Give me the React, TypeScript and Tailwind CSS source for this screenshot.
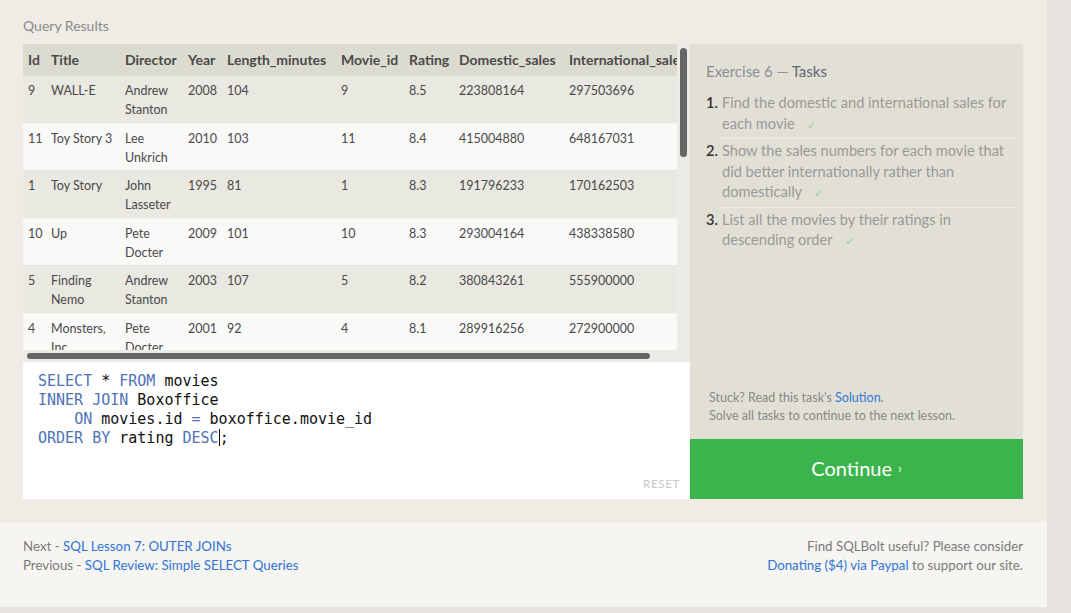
import React from 'react';

const COLS = [
  { key: 'id', label: 'Id', w: 23 },
  { key: 'title', label: 'Title', w: 74 },
  { key: 'director', label: 'Director', w: 63 },
  { key: 'year', label: 'Year', w: 39 },
  { key: 'len', label: 'Length_minutes', w: 114 },
  { key: 'mid', label: 'Movie_id', w: 68 },
  { key: 'rating', label: 'Rating', w: 50 },
  { key: 'dom', label: 'Domestic_sales', w: 110 },
  { key: 'intl', label: 'International_sales', w: 140 },
];

const ROWS = [
  ['9', 'WALL-E', 'Andrew Stanton', '2008', '104', '9', '8.5', '223808164', '297503696'],
  ['11', 'Toy Story 3', 'Lee Unkrich', '2010', '103', '11', '8.4', '415004880', '648167031'],
  ['1', 'Toy Story', 'John Lasseter', '1995', '81', '1', '8.3', '191796233', '170162503'],
  ['10', 'Up', 'Pete Docter', '2009', '101', '10', '8.3', '293004164', '438338580'],
  ['5', 'Finding Nemo', 'Andrew Stanton', '2003', '107', '5', '8.2', '380843261', '555900000'],
  ['4', 'Monsters, Inc.', 'Pete Docter', '2001', '92', '4', '8.1', '289916256', '272900000'],
  ['7', 'Ratatouille', 'Brad Bird', '2007', '115', '7', '8.0', '206445654', '417277164'],
];

const TASKS = [
  'Find the domestic and international sales for each movie',
  'Show the sales numbers for each movie that did better internationally rather than domestically',
  'List all the movies by their ratings in descending order',
];

function Kw({ children }: { children: React.ReactNode }) {
  return <span className="text-[#4f72b8]">{children}</span>;
}

function ResultsTable() {
  return (
    <div className="flex flex-col h-[318px]">
      <div className="flex h-[306px]">
        <div className="w-[654px] overflow-hidden">
          <table className="table-fixed border-collapse leading-[19px]" style={{ width: 681 }}>
            <colgroup>
              {COLS.map((c) => (
                <col key={c.key} style={{ width: c.w }} />
              ))}
            </colgroup>
            <thead>
              <tr className="bg-[#dcdbd0]">
                {COLS.map((c) => (
                  <th
                    key={c.key}
                    className="text-left text-[14px] font-bold text-[#4a4a4a] whitespace-nowrap pl-[5px] pt-[6px] pb-[7px] overflow-hidden"
                  >
                    {c.label}
                  </th>
                ))}
              </tr>
            </thead>
            <tbody>
              {ROWS.map((r, i) => (
                <tr
                  key={i}
                  className={
                    i % 2 === 0
                      ? 'bg-[#e9e8e1] border-b border-[#f4f3ef]'
                      : 'bg-[#f9f9f8] border-b border-[#e4e3dc]'
                  }
                >
                  {r.map((v, j) => (
                    <td key={j} className="align-top text-[12.5px] pl-[5px] pt-[5px] pb-[3.6px] text-[#4a4a4a]">
                      {v}
                    </td>
                  ))}
                </tr>
              ))}
            </tbody>
          </table>
        </div>
        <div className="w-[13px] bg-[#ecebe6] pt-[4px] pl-[3px]">
          <div className="w-[7px] h-[109px] rounded-full bg-[#666]" />
        </div>
      </div>
      <div className="flex h-[12px]">
        <div className="w-[654px] bg-[#ecebe6] pt-[3px] pl-[4px]">
          <div className="h-[6px] w-[623px] rounded-full bg-[#666]" />
        </div>
        <div className="w-[13px] bg-[#ecebe6]" />
      </div>
    </div>
  );
}

function Editor() {
  return (
    <div className="h-[137px] bg-white flex flex-col">
      <pre
        className="pl-[15px] pt-[10px] text-[15px] leading-[19px] text-[#111]"
        style={{ fontFamily: '"DejaVu Sans Mono", monospace' }}
      >
        <Kw>SELECT</Kw> * <Kw>FROM</Kw> movies{'\n'}
        <Kw>INNER JOIN</Kw> Boxoffice{'\n'}
        {'    '}<Kw>ON</Kw> movies.id <Kw>=</Kw> boxoffice.movie_id{'\n'}
        <Kw>ORDER BY</Kw> rating <Kw>DESC</Kw>
        <span className="inline-block w-px h-[17px] bg-[#111] align-[-3px]" />;
      </pre>
      <div className="mt-auto flex justify-end pr-[10px] pb-[9px]">
        <span className="text-[11.5px] leading-[13px] text-[#c9c9c9] tracking-[0.06em]">RESET</span>
      </div>
    </div>
  );
}

function TaskPanel() {
  return (
    <div className="w-[333px] flex flex-col">
      <div className="flex-1 bg-[#e2e0d5] flex flex-col">
        <div className="pl-[16px] pr-[7px] pt-[17px]">
          <div className="text-[15px] leading-[20px]">
            <span className="text-[#8a8f9b]">Exercise 6 — </span>
            <span className="text-[#5f6576]">Tasks</span>
          </div>
          <ol className="mt-[10px]">
            {TASKS.map((t, i) => (
              <li key={i} className="flex text-[14.6px] leading-[20.5px]">
                <span className="w-[16px] shrink-0 font-semibold text-[#333] pt-[2px]">{i + 1}.</span>
                <span
                  className={
                    i < TASKS.length - 1
                      ? 'flex-1 text-[#999] pt-[2px] pb-[4px] border-b border-[#eeede6]'
                      : 'flex-1 text-[#999] pt-[2px] pb-[4px]'
                  }
                >
                  {t}
                  <span className="ml-[12px] text-[11px] leading-none text-[#8fd19b]">✓</span>
                </span>
              </li>
            ))}
          </ol>
        </div>
        <div className="mt-auto pl-[19px] pb-[14px] text-[12.5px] leading-[18px] text-[#888]">
          <div>
            Stuck? Read this task's <span className="text-[#2f78d6]">Solution</span>.
          </div>
          <div>Solve all tasks to continue to the next lesson.</div>
        </div>
      </div>
      <div className="h-[60px] bg-[#3bb54b] flex items-center justify-center text-white">
        <span className="text-[20px] leading-[24px] -mt-[2px]">Continue</span>
        <span className="text-[13px] ml-[6px]">›</span>
      </div>
    </div>
  );
}

export default function App() {
  return (
    <div
      className="min-h-screen bg-[#e7e3e0]"
      style={{ fontFamily: 'Lato, "Open Sans", sans-serif' }}
    >
      <div className="w-[1047px] bg-[#efece5]">
        <main className="pl-[23px] pr-[24px] pt-[17px] pb-[23px]">
          <div className="text-[14px] leading-[18px] text-[#8a8a8a] mb-[9px]">Query Results</div>
          <div className="flex">
            <div className="w-[667px]">
              <ResultsTable />
              <Editor />
            </div>
            <TaskPanel />
          </div>
        </main>
        <footer className="bg-[#f6f5f2] h-[85px] pl-[23px] pr-[24px] pt-[15px] flex justify-between text-[13.3px] leading-[19px] text-[#7a7a7a]">
          <div>
            <div>
              Next - <span className="text-[#2f74d6]">SQL Lesson 7: OUTER JOINs</span>
            </div>
            <div>
              Previous - <span className="text-[#2f74d6]">SQL Review: Simple SELECT Queries</span>
            </div>
          </div>
          <div className="text-right">
            <div>Find SQLBolt useful? Please consider</div>
            <div>
              <span className="text-[#2f74d6]">Donating ($4) via Paypal</span> to support our site.
            </div>
          </div>
        </footer>
      </div>
    </div>
  );
}
